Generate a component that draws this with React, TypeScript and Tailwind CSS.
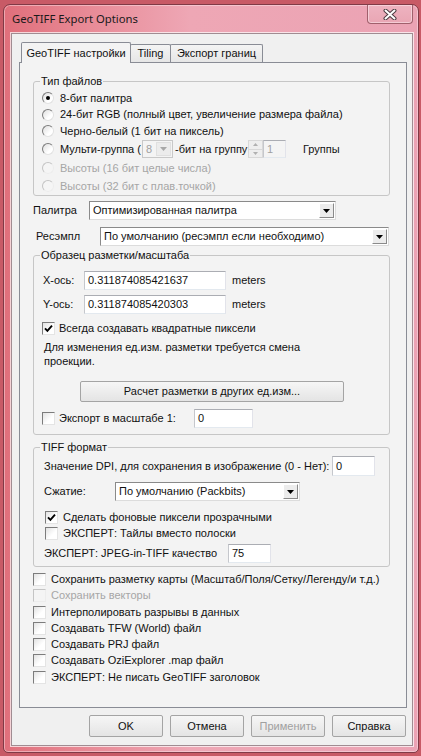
import React from "react";

const Check = ({ checked = false, disabled = false }: { checked?: boolean; disabled?: boolean }) => (
  <span
    className={
      "w-[13px] h-[13px] shrink-0 flex items-center justify-center border " +
      (disabled
        ? "border-t-[#c4c4c4] border-l-[#c4c4c4] border-r-[#ececec] border-b-[#ececec] bg-[#f4f4f4]"
        : "border-t-[#7c7c7c] border-l-[#7c7c7c] border-r-[#e4e4e4] border-b-[#e4e4e4] bg-[linear-gradient(135deg,#e2e2e2_0%,#ffffff_60%)]")
    }
  >
    {checked && (
      <svg width="9" height="9" viewBox="0 0 9 9">
        <path d="M1 4.3 L3.4 6.8 L8 1.6" stroke="#000" strokeWidth="1.9" fill="none" />
      </svg>
    )}
  </span>
);

const Radio = ({ checked = false, disabled = false }: { checked?: boolean; disabled?: boolean }) => (
  <span
    className={
      "w-[12px] h-[12px] shrink-0 rounded-full flex items-center justify-center border " +
      (disabled
        ? "border-t-[#c4c4c4] border-l-[#c4c4c4] border-r-[#ededed] border-b-[#ededed] bg-[#f5f5f5]"
        : "border-t-[#7c7c7c] border-l-[#7c7c7c] border-r-[#e2e2e2] border-b-[#e2e2e2] bg-[linear-gradient(135deg,#dedede_0%,#ffffff_65%)]")
    }
  >
    {checked && <span className="w-[4px] h-[4px] rounded-full bg-black" />}
  </span>
);

const TextBox = ({ value, w, h = "h-[19px]", disabled = false }: { value: string; w: string; h?: string; disabled?: boolean }) => (
  <div
    className={
      `${w} ${h} shrink-0 flex items-center pl-[3px] border border-t-[#abadb3] border-l-[#c5c7cc] border-r-[#e2e3ea] border-b-[#e3e9ef] ` +
      (disabled ? "bg-[#f4f4f4] text-[#a0a0a0]" : "bg-white text-[#111]")
    }
  >
    {value}
  </div>
);

const Tri = ({ color = "#000" }: { color?: string }) => (
  <svg width="7" height="4" viewBox="0 0 7 4">
    <path d="M0 0 H7 L3.5 4 Z" fill={color} />
  </svg>
);

const Combo = ({ text, w, disabled = false }: { text: string; w: string; disabled?: boolean }) => (
  <div
    className={
      `${w} h-full shrink-0 flex items-stretch border p-[1px] ` +
      (disabled
        ? "border-[#c8c8c8] bg-[#f4f4f4] text-[#a0a0a0]"
        : "border-t-[#8a8a8a] border-l-[#8a8a8a] border-r-[#dcdcdc] border-b-[#dcdcdc] bg-white text-[#111]")
    }
  >
    <div className="flex-1 flex items-center pl-[2px] overflow-hidden whitespace-nowrap">{text}</div>
    <div
      className={
        "w-[15px] flex items-center justify-center border " +
        (disabled
          ? "border-[#e0e0e0] bg-[#ececec]"
          : "border-t-[#ffffff] border-l-[#ffffff] border-r-[#8a8a8a] border-b-[#8a8a8a] bg-[#ececec]")
      }
    >
      <Tri color={disabled ? "#a8a8a8" : "#000"} />
    </div>
  </div>
);

const Btn = ({ text, w, h = "h-[22px]", disabled = false }: { text: string; w: string; h?: string; disabled?: boolean }) => (
  <div
    className={
      `${w} ${h} shrink-0 flex items-center justify-center rounded-[2px] border border-[#a4a4a4] bg-[linear-gradient(#f6f6f6,#e4e4e4)] ` +
      (disabled ? "text-[#a0a0a0]" : "text-[#111]")
    }
  >
    {text}
  </div>
);

const Group = ({ label, cls, children }: { label: string; cls: string; children: React.ReactNode }) => (
  <div className={`relative ml-[13px] w-[357px] border border-[#c6c6c6] rounded-[3px] flex flex-col ${cls}`}>
    <span className="absolute left-[6px] -top-[8px] px-[1px] leading-[14px] bg-[#f3f3f3]">{label}</span>
    {children}
  </div>
);

export default function App() {
  const bottomChecks: { t: string; h: string; d?: boolean }[] = [
    { t: "Сохранить разметку карты (Масштаб/Поля/Сетку/Легенду/и т.д.)", h: "h-[16px]" },
    { t: "Сохранить векторы", h: "h-[17px]", d: true },
    { t: "Интерполировать разрывы в данных", h: "h-[16px]" },
    { t: "Создавать TFW (World) файл", h: "h-[16px]" },
    { t: "Создавать PRJ файл", h: "h-[16px]" },
    { t: "Создавать OziExplorer .map файл", h: "h-[17px]" },
    { t: "ЭКСПЕРТ: Не писать GeoTIFF заголовок", h: "h-[16px]" },
  ];

  return (
    <div className="w-[421px] h-[756px] overflow-hidden bg-[#c85a66] pt-[4px] pl-[3px] font-['Liberation_Sans',Arial,sans-serif] text-[11px] text-[#111]">
      <div className="w-[416px] h-[749px] rounded-t-[7px] rounded-b-[5px] border border-[#803a46] bg-[linear-gradient(90deg,#e06f7b_0%,#e88a96_20%,#eea7b5_45%,#eba3b4_100%)] shadow-[inset_0_0_0_1px_rgba(255,235,240,0.45)] flex flex-col">
        {/* title bar */}
        <div className="h-[28px] flex shrink-0">
          <span className="ml-[8px] self-center mt-[-1px] font-['Noto_Sans',sans-serif] text-[11.3px] text-[#1a1a1a] leading-[16px]">
            GeoTIFF Export Options
          </span>
          <div className="ml-auto mr-[5px] w-[46px] h-[19px] rounded-b-[4px] border border-t-0 border-[#a0606c] bg-[linear-gradient(#eeb3c0,#e9a6b4)] shadow-[inset_0_0_0_1px_rgba(255,240,244,0.5)] flex items-center justify-center">
            <svg width="14" height="11" viewBox="0 0 14 11">
              <path d="M2.5 1.5 L11.5 9.5 M11.5 1.5 L2.5 9.5" stroke="#4b3a40" strokeWidth="4" strokeLinecap="round" />
              <path d="M2.5 1.5 L11.5 9.5 M11.5 1.5 L2.5 9.5" stroke="#ffffff" strokeWidth="2" strokeLinecap="round" />
            </svg>
          </div>
        </div>

        {/* client area */}
        <div className="ml-[7px] w-[402px] h-[713px] bg-[#f0f0f0] shadow-[inset_0_0_0_1px_#a08c92,0_0_0_1px_rgba(255,255,255,0.7)] flex flex-col">
          {/* tabs */}
          <div className="mt-[9px] h-[20px] flex items-end pl-[10px] relative z-10 shrink-0">
            <div className="w-[110px] h-[21px] -mb-[1px] border border-b-0 border-[#898c95] rounded-t-[2px] bg-[#f3f3f3] flex items-center justify-center">
              GeoTIFF настройки
            </div>
            <div className="w-[41px] h-[18px] -ml-[1px] border border-b-0 border-[#898c95] rounded-t-[2px] bg-[linear-gradient(#f4f4f4,#e6e6e6)] flex items-center justify-center">
              Tiling
            </div>
            <div className="w-[93px] h-[18px] -ml-[1px] border border-b-0 border-[#898c95] rounded-t-[2px] bg-[linear-gradient(#f4f4f4,#e6e6e6)] flex items-center justify-center">
              Экспорт границ
            </div>
          </div>

          {/* tab page */}
          <div className="ml-[8px] w-[388px] h-[646px] border border-[#898c95] bg-[#f3f3f3] flex flex-col shrink-0">
            {/* Group 1 */}
            <Group label="Тип файлов" cls="mt-[18px] h-[115px]">
              <div className="mt-[8px] h-[16px] flex items-center pl-[8px]">
                <Radio checked />
                <span className="ml-[6px]">8-бит палитра</span>
              </div>
              <div className="h-[17px] flex items-center pl-[8px]">
                <Radio />
                <span className="ml-[6px]">24-бит RGB (полный цвет, увеличение размера файла)</span>
              </div>
              <div className="h-[16px] flex items-center pl-[8px]">
                <Radio />
                <span className="ml-[6px]">Черно-белый (1 бит на пиксель)</span>
              </div>
              <div className="h-[20px] flex items-center pl-[8px]">
                <Radio />
                <span className="ml-[6px] w-[82px] whitespace-nowrap">Мульти-группа (</span>
                <div className="h-[18px] flex">
                  <Combo text="8" w="w-[31px]" disabled />
                </div>
                <span className="ml-[2px] w-[73px] whitespace-nowrap">-бит на группу</span>
                <div className="w-[15px] h-[18px] flex flex-col">
                  <div className="flex-1 border border-[#d8d8d8] bg-[#eeeeee] flex items-center justify-center">
                    <svg width="5" height="3" viewBox="0 0 5 3"><path d="M0 3 H5 L2.5 0 Z" fill="#b0b0b0" /></svg>
                  </div>
                  <div className="flex-1 border border-t-0 border-[#d8d8d8] bg-[#eeeeee] flex items-center justify-center">
                    <svg width="5" height="3" viewBox="0 0 5 3"><path d="M0 0 H5 L2.5 3 Z" fill="#b0b0b0" /></svg>
                  </div>
                </div>
                <TextBox value="1" w="w-[23px]" h="h-[18px]" disabled />
                <span className="ml-[17px]">Группы</span>
              </div>
              <div className="h-[18px] flex items-center pl-[8px] text-[#a6a6a6]">
                <Radio disabled />
                <span className="ml-[6px]">Высоты (16 бит целые числа)</span>
              </div>
              <div className="h-[18px] flex items-center pl-[8px] text-[#a6a6a6]">
                <Radio disabled />
                <span className="ml-[6px]">Высоты (32 бит с плав.точкой)</span>
              </div>
            </Group>

            {/* Palette */}
            <div className="mt-[5px] h-[19px] flex items-center pl-[13px]">
              <span className="w-[56px]">Палитра</span>
              <Combo text="Оптимизированная палитра" w="w-[247px]" />
            </div>
            {/* Resample */}
            <div className="mt-[7px] h-[19px] flex items-center pl-[16px]">
              <span className="w-[64px]">Ресэмпл</span>
              <Combo text="По умолчанию (ресэмпл если необходимо)" w="w-[289px]" />
            </div>

            {/* Group 2 */}
            <Group label="Образец разметки/масштаба" cls="mt-[9px] h-[180px]">
              <div className="mt-[15px] h-[19px] flex items-center pl-[9px]">
                <span className="w-[41px]">X-ось:</span>
                <TextBox value="0.311874085421637" w="w-[142px]" />
                <span className="ml-[6px]">meters</span>
              </div>
              <div className="mt-[5px] h-[19px] flex items-center pl-[9px]">
                <span className="w-[41px]">Y-ось:</span>
                <TextBox value="0.311874085420303" w="w-[142px]" />
                <span className="ml-[6px]">meters</span>
              </div>
              <div className="mt-[7px] h-[14px] flex items-center pl-[8px]">
                <Check checked />
                <span className="ml-[4px]">Всегда создавать квадратные пиксели</span>
              </div>
              <div className="mt-[5px] pl-[10px] leading-[14px]">
                Для изменения ед.изм. разметки требуется смена
                <br />
                проекции.
              </div>
              <div className="mt-[13px] ml-[46px] flex">
                <Btn text="Расчет разметки в других ед.изм..." w="w-[264px]" h="h-[21px]" />
              </div>
              <div className="mt-[7px] h-[19px] flex items-center pl-[8px]">
                <Check />
                <span className="ml-[4px] w-[135px]">Экспорт в масштабе 1:</span>
                <TextBox value="0" w="w-[59px]" />
              </div>
            </Group>

            {/* Group 3 */}
            <Group label="TIFF формат" cls="mt-[12px] h-[120px]">
              <div className="mt-[8px] h-[20px] flex items-center pl-[10px]">
                <span className="w-[288px] whitespace-nowrap">Значение DPI, для сохранения в изображение (0 - Нет):</span>
                <TextBox value="0" w="w-[43px]" h="h-[20px]" />
              </div>
              <div className="mt-[6px] h-[19px] flex items-center pl-[10px]">
                <span className="w-[71px]">Сжатие:</span>
                <Combo text="По умолчанию (Packbits)" w="w-[185px]" />
              </div>
              <div className="mt-[9px] h-[14px] flex items-center pl-[11px]">
                <Check checked />
                <span className="ml-[5px]">Сделать фоновые пиксели прозрачными</span>
              </div>
              <div className="mt-[2px] h-[14px] flex items-center pl-[11px]">
                <Check />
                <span className="ml-[5px]">ЭКСПЕРТ: Тайлы вместо полоски</span>
              </div>
              <div className="mt-[4px] h-[19px] flex items-center pl-[10px]">
                <span className="w-[184px] whitespace-nowrap">ЭКСПЕРТ: JPEG-in-TIFF качество</span>
                <TextBox value="75" w="w-[43px]" />
              </div>
            </Group>

            {/* bottom checkboxes */}
            <div className="mt-[4px] flex flex-col">
              {bottomChecks.map((c) => (
                <div key={c.t} className={`${c.h} flex items-center pl-[13px] ${c.d ? "text-[#a6a6a6]" : ""}`}>
                  <Check disabled={c.d} />
                  <span className="ml-[5px] whitespace-nowrap">{c.t}</span>
                </div>
              ))}
            </div>
          </div>

          {/* dialog buttons */}
          <div className="mt-[7px] flex justify-end gap-[7px] pr-[7px]">
            <Btn text="OK" w="w-[74px]" />
            <Btn text="Отмена" w="w-[74px]" />
            <Btn text="Применить" w="w-[74px]" disabled />
            <Btn text="Справка" w="w-[74px]" />
          </div>
        </div>
      </div>
    </div>
  );
}
